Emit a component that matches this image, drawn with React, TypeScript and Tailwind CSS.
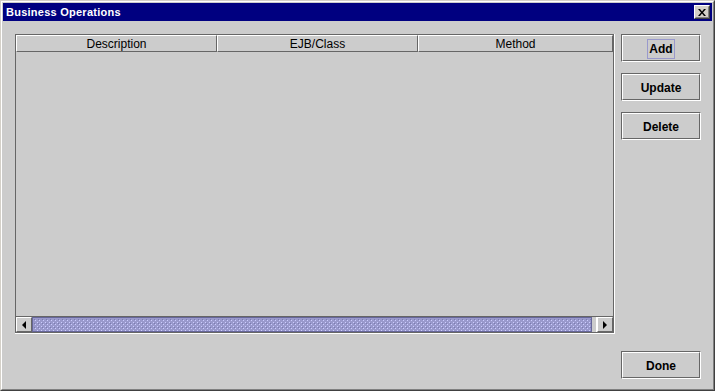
import React from "react";

function Btn({ label, focus }: { label: string; focus?: boolean }) {
  return (
    <div className="w-[80px] h-[28px] border border-t-[#666666] border-l-[#666666] border-r-white border-b-white">
      <div className="w-full h-full border border-t-white border-l-white border-r-[#666666] border-b-[#666666] flex items-center justify-center pt-px text-[12px] font-bold text-black leading-none">
        {focus ? (
          <span className="h-[20px] px-[1px] border border-[#9999cc] flex items-center">{label}</span>
        ) : (
          <span>{label}</span>
        )}
      </div>
    </div>
  );
}

function Thumb() {
  return (
    <div className="flex-1 h-full border border-[#666699] bg-[#9999cc] overflow-hidden">
      <svg width="100%" height="100%">
        <defs>
          <pattern id="bumps" width="4" height="4" patternUnits="userSpaceOnUse">
            <rect x="0" y="0" width="1" height="1" fill="#ccccff" />
            <rect x="1" y="1" width="1" height="1" fill="#7a7ab0" />
            <rect x="2" y="2" width="1" height="1" fill="#ccccff" />
          </pattern>
        </defs>
        <rect x="1" y="1" width="100%" height="100%" fill="url(#bumps)" />
      </svg>
    </div>
  );
}

function ArrowBtn({ dir }: { dir: "left" | "right" }) {
  return (
    <div className="w-[16px] h-full bg-[#cccccc] border-t border-l border-white border-r border-b border-r-[#666666] border-b-[#666666] flex items-center justify-center">
      <svg width="4" height="8" viewBox="0 0 4 8">
        {dir === "left" ? (
          <polygon points="4,0 4,8 0,4" fill="#000" />
        ) : (
          <polygon points="0,0 0,8 4,4" fill="#000" />
        )}
      </svg>
    </div>
  );
}

export default function App() {
  return (
    <div className="w-[715px] h-[391px] flex border border-[#d4d0c8] border-r-[#404040] border-b-[#404040] font-['Liberation_Sans',Arial,sans-serif]">
      <div className="flex-1 flex flex-col border border-t-white border-l-white border-r-[#808080] border-b-[#808080] p-px bg-[#cccccc]">
        {/* title bar */}
        <div className="h-[18px] bg-[#000080] flex items-center justify-between pl-[3px] pr-[2px]">
          <span className="text-white text-[11px] font-bold leading-none tracking-[0.25px]">Business Operations</span>
          <div className="w-[16px] h-[14px] border border-t-white border-l-white border-r-[#404040] border-b-[#404040]">
            <div className="w-full h-full bg-[#d4d0c8] border border-t-[#d4d0c8] border-l-[#d4d0c8] border-r-[#808080] border-b-[#808080] flex items-center justify-center">
              <svg width="8" height="7" viewBox="0 0 8 7">
                <path d="M0 0h2l2 2.5L6 0h2L5 3.5 8 7H6L4 4.5 2 7H0l3-3.5z" fill="#000" />
              </svg>
            </div>
          </div>
        </div>
        {/* content */}
        <div className="flex-1 flex pl-[12px] pt-[13px] pr-[11px] pb-[9px]">
          <div className="w-[600px] h-[300px] flex border-r border-b border-white">
            <div className="flex-1 flex flex-col border border-[#666666]">
              <div className="h-[17px] flex text-[12px] text-black leading-none">
                <div className="w-[201px] h-full border border-t-white border-l-white border-r-[#666666] border-b-[#666666] flex items-center justify-center">Description</div>
                <div className="w-[201px] h-full border border-t-white border-l-white border-r-[#666666] border-b-[#666666] flex items-center justify-center">EJB/Class</div>
                <div className="w-[195px] h-full border border-t-white border-l-white border-r-[#666666] border-b-[#666666] flex items-center justify-center">Method</div>
              </div>
              <div className="flex-1" />
              <div className="h-[16px] flex border-t border-[#666666]">
                <ArrowBtn dir="left" />
                <Thumb />
                <div className="w-[5px] h-full bg-[#cccccc] border-r border-white" />
                <ArrowBtn dir="right" />
              </div>
            </div>
          </div>
          <div className="ml-[6px] w-[80px] flex flex-col gap-[11px]">
            <Btn label="Add" focus />
            <Btn label="Update" />
            <Btn label="Delete" />
            <div className="mt-auto">
              <Btn label="Done" />
            </div>
          </div>
        </div>
      </div>
    </div>
  );
}
